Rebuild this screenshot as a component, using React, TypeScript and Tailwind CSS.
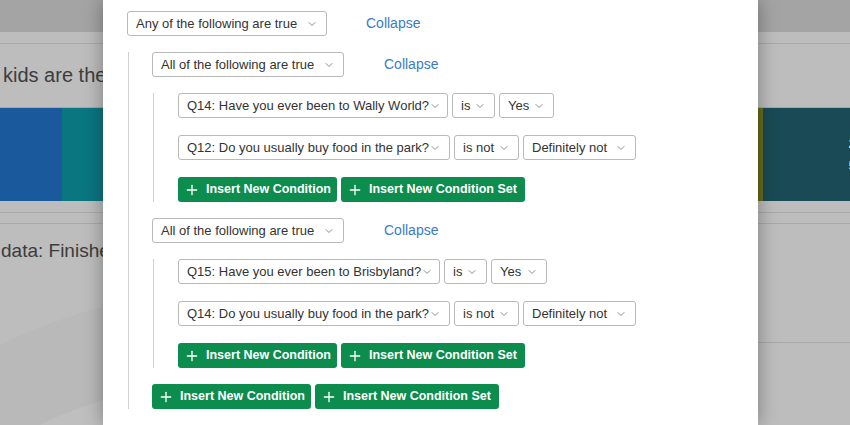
import { ChevronDown, Plus } from "lucide-react";

interface SelectProps {
    label: string;
    width: string;
}

const Select: React.FC<SelectProps> = ({ label, width }) => (
    <div className={`${width} h-[25px] flex items-center justify-between pl-[8px] pr-[8px] border border-[#b9b9b9] rounded-[3px] bg-white text-[13px] text-[#333] whitespace-nowrap`}>
        <span>{label}</span>
        <ChevronDown size={12} strokeWidth={1.5} className="text-[#666] shrink-0" />
    </div>
);

const InsertButtons: React.FC = () => (
    <div className="flex gap-1">
        <button type="button" className="w-[159px] h-[25px] flex items-center gap-[6px] pl-[6px] bg-[#0c8c4d] rounded-[3px] text-white text-[12.5px] font-bold whitespace-nowrap">
            <Plus size={16} strokeWidth={2} />
            Insert New Condition
        </button>
        <button type="button" className="w-[184px] h-[25px] flex items-center gap-[6px] pl-[6px] bg-[#0c8c4d] rounded-[3px] text-white text-[12.5px] font-bold whitespace-nowrap">
            <Plus size={16} strokeWidth={2} />
            Insert New Condition Set
        </button>
    </div>
);

const GroupHeader: React.FC<{ label: string; width: string; gap: string }> = ({ label, width, gap }) => (
    <div className={`flex items-center ${gap}`}>
        <Select label={label} width={width} />
        <span className="text-[14px] text-[#3a7bc6]">Collapse</span>
    </div>
);

export default function App() {
    return (
        <div className="relative w-full h-[425px] overflow-hidden bg-[#bdbdbd] font-['Liberation_Sans',Arial,sans-serif]">
            {/* dimmed page behind the dialog */}
            <div className="h-[32px] bg-[#a4a4a4]" />
            <div className="h-[12px] border-b border-[#a9a9a9]" />
            <div className="h-[63px] flex items-center pl-[3px] pb-[2px] text-[20px] text-[#3c3c3c]">kids are the</div>
            <div className="h-[94px] flex border-t border-[#9fa9ad]">
                <div className="w-[62px] bg-[#1a5a9c]" />
                <div className="w-[696px] bg-[#0a7680]" />
                <div className="w-[5px] bg-[#666b1c]" />
                <div className="flex-1 bg-[#1a4a55] flex items-center justify-end">
                    <span className="text-[13px] leading-[22px] text-white font-bold translate-x-[6px]">2<br />5</span>
                </div>
            </div>
            <div className="h-[12px] border-b border-[#a9a9a9]" />
            <div className="h-[11px] border-b border-[#a9a9a9]" />
            <div className="h-[55px] flex items-center pl-[1px] text-[19px] text-[#3c3c3c]">data: Finishe</div>
            <div className="flex justify-end mt-[63px]">
                <div className="w-[92px] border-b border-[#a9a9a9]" />
            </div>
            <svg className="absolute left-0 top-[260px]" width="110" height="165" viewBox="0 0 110 165">
                <path d="M0 85 C 30 70, 70 55, 110 45 L110 165 L0 165 Z" fill="#b9b9b9" />
                <path d="M40 165 C 60 155, 85 145, 110 138 L110 165 Z" fill="#bfbfbf" />
            </svg>

            {/* dialog */}
            <div className="absolute left-[103px] top-0 w-[655px] h-[425px] bg-white shadow-[0_0_18px_rgba(0,0,0,0.35)] pl-[24px] pt-[11px]">
                <div className="flex flex-col gap-4">
                    <GroupHeader label="Any of the following are true" width="w-[200px]" gap="gap-[39px]" />
                    <div className="ml-[1px] border-l border-[#d0d0d0] pl-[23px] flex flex-col gap-4">
                        <GroupHeader label="All of the following are true" width="w-[192px]" gap="gap-[40px]" />
                        <div className="ml-[1px] border-l border-[#d0d0d0] pl-[24px] flex flex-col gap-[17px]">
                            <div className="flex gap-1">
                                <Select label="Q14: Have you ever been to Wally World?" width="w-[270px]" />
                                <Select label="is" width="w-[43px]" />
                                <Select label="Yes" width="w-[55px]" />
                            </div>
                            <div className="flex gap-1">
                                <Select label="Q12: Do you usually buy food in the park?" width="w-[272px]" />
                                <Select label="is not" width="w-[65px]" />
                                <Select label="Definitely not" width="w-[113px]" />
                            </div>
                            <InsertButtons />
                        </div>
                        <GroupHeader label="All of the following are true" width="w-[192px]" gap="gap-[40px]" />
                        <div className="ml-[1px] border-l border-[#d0d0d0] pl-[24px] flex flex-col gap-[17px]">
                            <div className="flex gap-1">
                                <Select label="Q15: Have you ever been to Brisbyland?" width="w-[262px]" />
                                <Select label="is" width="w-[43px]" />
                                <Select label="Yes" width="w-[56px]" />
                            </div>
                            <div className="flex gap-1">
                                <Select label="Q14: Do you usually buy food in the park?" width="w-[272px]" />
                                <Select label="is not" width="w-[65px]" />
                                <Select label="Definitely not" width="w-[113px]" />
                            </div>
                            <InsertButtons />
                        </div>
                        <InsertButtons />
                    </div>
                </div>
            </div>
        </div>
    );
}
